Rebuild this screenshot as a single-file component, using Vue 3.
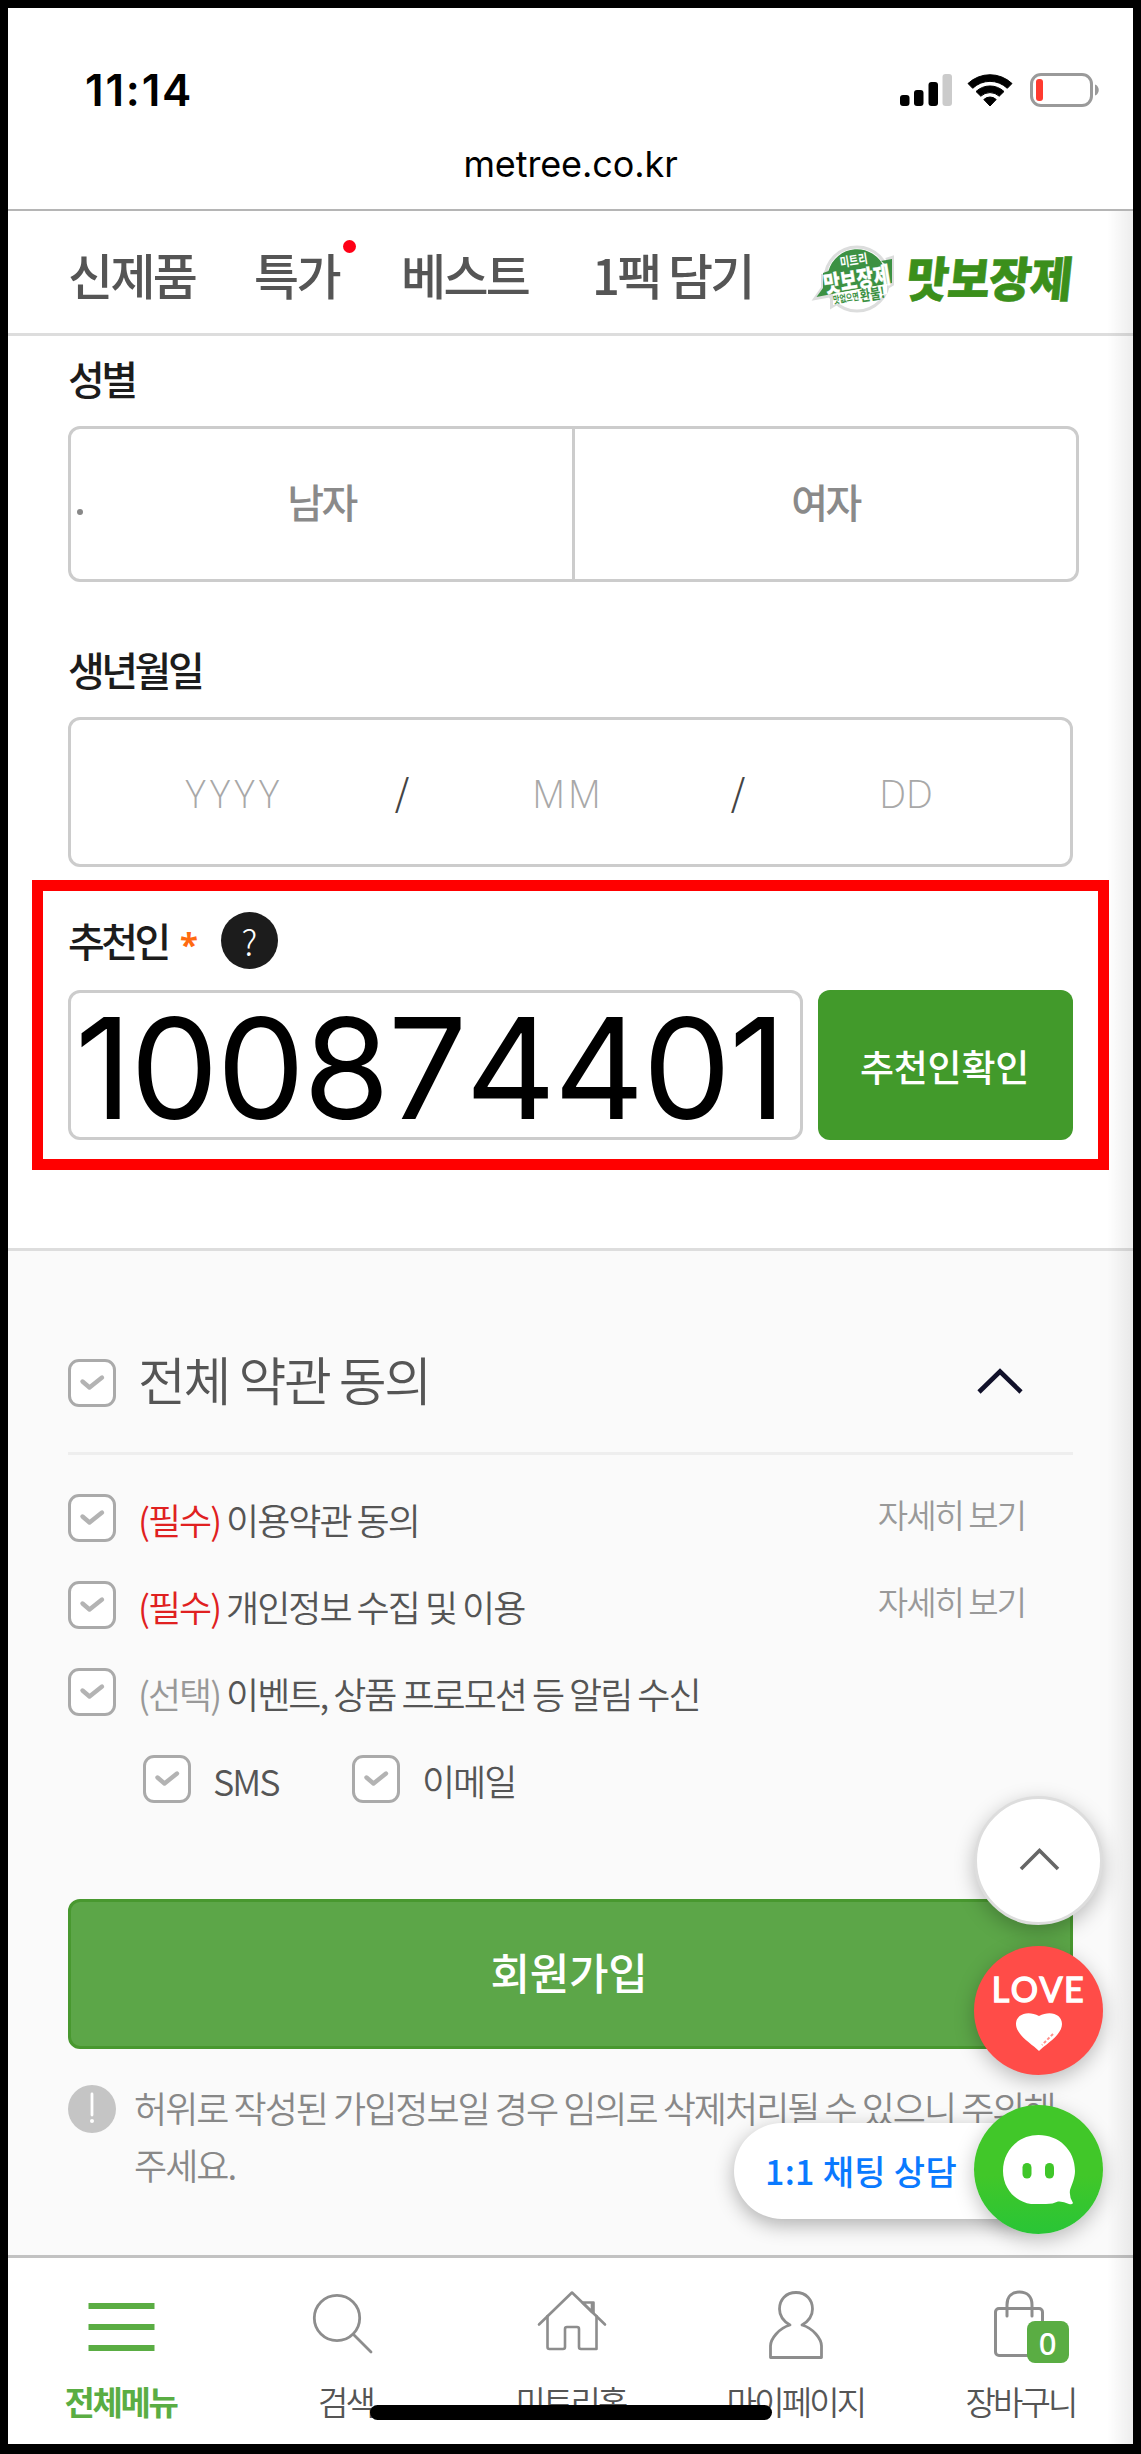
<script setup>
import { h } from 'vue'

const Check = () =>
  h('svg', { class: 'tick', viewBox: '0 0 48 48' }, [
    h('path', {
      d: 'M14.5 22.5L21.5 28.5L34 18.5',
      fill: 'none',
      stroke: '#b3b3b3',
      'stroke-width': 4.4,
      'stroke-linecap': 'round',
      'stroke-linejoin': 'round'
    })
  ])

const menus = [
  { text: '신제품', cls: 'm1' },
  { text: '특가', cls: 'm2', dot: true },
  { text: '베스트', cls: 'm3' },
  { text: '1팩 담기', cls: 'm4' }
]

const terms = [
  { tag: '(필수)', text: '이용약관 동의', required: true, more: true },
  { tag: '(필수)', text: '개인정보 수집 및 이용', required: true, more: true },
  { tag: '(선택)', text: '이벤트, 상품 프로모션 등 알림 수신', required: false, more: false }
]
</script>

<template>
  <div class="phone">
    <header class="status">
      <div class="status-row">
        <span class="time">11:14</span>
        <div class="indicators">
          <svg class="signal" width="52" height="34" viewBox="0 0 52 34">
            <rect x="0" y="22" width="9.5" height="11" rx="3" />
            <rect x="14" y="17" width="9.5" height="16" rx="3" />
            <rect x="28.500" y="9" width="9.500" height="24" rx="3" />
            <rect x="42.500" y="1" width="9.500" height="32" rx="3" fill="#cbcbcb" />
          </svg>
          <svg class="wifi" width="46" height="34" viewBox="0 0 46 34">
            <path d="M1 10.500A32 32 0 0 1 45 10.500L40.300 15.300A25 25 0 0 0 5.700 15.300Z" stroke="#000" stroke-width="1" stroke-linejoin="round" />
            <path d="M9 18.500A20.500 20.500 0 0 1 37 18.500L32.200 23.200A13.500 13.500 0 0 0 13.800 23.200Z" stroke="#000" stroke-width="1" stroke-linejoin="round" />
            <path d="M16.800 26.500A9 9 0 0 1 29.200 26.500L23 33Z" stroke="#000" stroke-width="1" stroke-linejoin="round" />
          </svg>
          <svg class="battery" width="70" height="34" viewBox="0 0 70 34">
            <rect x="1.500" y="1.500" width="60" height="31" rx="9.500" fill="none" stroke="#9a9a9a" stroke-width="3" />
            <rect x="6" y="6" width="7" height="22" rx="3" fill="#ff3b30" />
            <path d="M65 11.500C70 13 70 21 65 22.500Z" fill="#9a9a9a" />
          </svg>
        </div>
      </div>
      <div class="url">metree.co.kr</div>
    </header>

    <nav class="menu">
      <span v-for="m in menus" :key="m.text" class="menu-item" :class="m.cls">{{ m.text }}<i v-if="m.dot" class="dot"></i></span>
      <span class="brand">
        <svg class="badge" width="84" height="68" viewBox="0 0 84 68">
          <circle cx="43" cy="34" r="32" fill="#fff" stroke="#dcdddd" stroke-width="3" />
          <path d="M11 28L17 26M9 29V43L2 53L18 50V61L26 56M72 15L78 13V39L73 42" fill="none" stroke="#dcdddd" stroke-width="4" />
          <path d="M14.500 26A29.500 29.500 0 0 1 70 22L78 14V38L18 49L2.500 52L9 43V28Z" fill="#3c9143" />
          <path d="M67 16L78 14V24Z" fill="#3c9143" />
          <path d="M19 49L73 39V49L19 60Z" fill="#fff" />
          <g transform="rotate(-9 42 36)" fill="#fff" text-anchor="middle" class="badge-text">
            <text x="43" y="20" font-size="13" textLength="28" lengthAdjust="spacingAndGlyphs">미트리</text>
            <text x="43" y="43" font-size="23" textLength="67" lengthAdjust="spacingAndGlyphs" font-weight="900" stroke="#fff" stroke-width=".3">맛보장제</text>
            <text x="29.500" y="55" font-size="10" textLength="26" lengthAdjust="spacingAndGlyphs" fill="#3c9143">맛없으면</text>
            <text x="56" y="57" font-size="15" textLength="25" lengthAdjust="spacingAndGlyphs" fill="#3c9143">환불!</text>
          </g>
        </svg>
        <b class="brand-name">맛보장제</b>
      </span>
    </nav>

    <main class="form">
      <label class="title">성별</label>
      <div class="gender">
        <div class="choice"><i class="speck"></i>남자</div>
        <div class="choice">여자</div>
      </div>

      <label class="title birth-title">생년월일</label>
      <div class="birth">
        <span class="ph yyyy">YYYY</span><span class="slash">/</span>
        <span class="ph mm">MM</span><span class="slash">/</span>
        <span class="ph dd">DD</span>
      </div>

      <div class="referrer">
        <div class="ref-head">
          <label class="title">추천인</label>
          <span class="star">*</span>
          <span class="help">?</span>
        </div>
        <div class="ref-row">
          <div class="ref-input">100874401</div>
          <button class="ref-btn">추천인확인</button>
        </div>
      </div>
    </main>

    <section class="terms">
      <div class="all">
        <span class="box"><Check /></span>
        <span class="all-text">전체 약관 동의</span>
        <svg class="fold" width="50" height="30" viewBox="0 0 50 30">
          <path d="M4 25L25 4.500L46 25" fill="none" stroke="#11112a" stroke-width="4.600" />
        </svg>
      </div>
      <div v-for="t in terms" :key="t.text" class="term">
        <span class="box"><Check /></span>
        <span class="term-text"><em :class="{ must: t.required }">{{ t.tag }}</em> {{ t.text }}</span>
        <a v-if="t.more" class="more">자세히 보기</a>
      </div>
      <div class="term sub">
        <span class="box"><Check /></span>
        <span class="term-text sms">SMS</span>
        <span class="box"><Check /></span>
        <span class="term-text">이메일</span>
      </div>

      <button class="join">회원가입</button>

      <div class="notice">
        <svg width="48" height="48" viewBox="0 0 48 48">
          <circle cx="24" cy="24" r="24" fill="#c5c5c5" />
          <path d="M24 9V30" stroke="#fff" stroke-width="2.800" stroke-linecap="round" />
          <circle cx="24" cy="36" r="2" fill="#fff" />
        </svg>
        <p>허위로 작성된 가입정보일 경우 임의로 삭제처리될 수 있으니 주의해<br />주세요.</p>
      </div>
    </section>

    <footer class="tabs">
      <div class="tab on">
        <svg width="70" height="72" viewBox="0 0 70 72">
          <path d="M2.500 18H68.500M2.500 39H68.500M2.500 60H68.500" stroke="#5aad43" stroke-width="6" />
        </svg>
        <span>전체메뉴</span>
      </div>
      <div class="tab">
        <svg width="70" height="72" viewBox="0 0 70 72">
          <g fill="none" stroke="#8d8d8d" stroke-width="2.800" stroke-linecap="round">
            <circle cx="26" cy="30" r="22.700" />
            <path d="M42.500 46.500L60 64" />
          </g>
        </svg>
        <span>검색</span>
      </div>
      <div class="tab">
        <svg width="74" height="72" viewBox="0 0 74 72">
          <g fill="none" stroke="#8d8d8d" stroke-width="2.600" stroke-linecap="round" stroke-linejoin="round">
            <path d="M5 36.500L38 4.500L71 36.500" />
            <path d="M13.500 28V59Q13.500 61 15.500 61H29Q31 61 31 59V41Q31 39 33 39H43Q45 39 45 41V59Q45 61 47 61H62.500V28" />
            <path d="M48.500 14.500H59.500V25M49 15L58 24V15" />
          </g>
        </svg>
        <span>미트리홈</span>
      </div>
      <div class="tab">
        <svg width="70" height="72" viewBox="0 0 70 72">
          <path d="M29 37C22 33 18.500 27.500 18.500 21C18.500 11.500 25 4.500 35 4.500S51.500 11.500 51.500 21C51.500 27.500 48 33 41 37C52 40 60.500 51 60.500 58V69.500H9.500V58C9.500 51 18 40 29 37Z" fill="none" stroke="#8d8d8d" stroke-width="2.800" stroke-linejoin="round" />
        </svg>
        <span>마이페이지</span>
      </div>
      <div class="tab">
        <div class="bag">
          <svg width="70" height="72" viewBox="0 0 70 72">
            <g fill="none" stroke="#8d8d8d" stroke-width="3" stroke-linecap="round">
              <rect x="9.500" y="20.500" width="47" height="47" rx="3.500" />
              <path d="M21 28V17C21 8 26.500 4 33.500 4S46 8 46 17V28" />
            </g>
          </svg>
          <b>0</b>
        </div>
        <span>장바구니</span>
      </div>
      <i class="home-bar"></i>
    </footer>

    <div class="edge"></div>

    <div class="chat-pill">1:1 채팅 상담</div>
    <div class="floats">
      <div class="fab up">
        <svg width="44" height="28" viewBox="0 0 44 28">
          <path d="M4 24L22.500 5.500L41 24" fill="none" stroke="#666" stroke-width="3.600" />
        </svg>
      </div>
      <div class="fab love">
        <span>LOVE</span>
        <svg width="48" height="40" viewBox="0 0 48 40">
          <path d="M24 39C17 32 1 23 1 12C1 2 13-2 24 4C35-2 47 2 47 12C47 23 31 32 24 39Z" fill="#fff" />
          <path d="M38 22L32 28M31 29L27 33" stroke="#ff8f8a" stroke-width="2" stroke-dasharray="3 2" />
        </svg>
      </div>
      <div class="fab chat">
        <svg width="129" height="129" viewBox="0 0 129 129">
          <path d="M64.500 30C85 30 101 45 101 66C101 73 98 79 96 85Q95 92 99 98Q98 100 95 99Q89 96 84 96.500Q79 99 72 99H57C42 97 29 84 29 66C29 46 44 30 64.500 30Z" fill="#fff" />
          <rect x="48.500" y="58" width="9" height="15.500" rx="4.500" fill="#3fc629" />
          <rect x="71" y="58" width="9" height="15.500" rx="4.500" fill="#3fc629" />
        </svg>
      </div>
    </div>
  </div>
</template>

<style>
body {
  margin: 0;
}
</style>

<style scoped>
* {
  box-sizing: border-box;
}
.phone {
  position: relative;
  width: 1141px;
  height: 2454px;
  border: 8px solid #000;
  border-bottom-width: 10px;
  background: #fff;
  overflow: hidden;
  display: flex;
  flex-direction: column;
  font-family: 'Noto Sans CJK KR', sans-serif;
  color: #555;
  white-space: nowrap;
}
button {
  border: 0;
  padding: 0;
  font-family: inherit;
  color: #fff;
}
svg {
  display: block;
  flex: none;
}

/* status bar */
.status {
  height: 203px;
  border-bottom: 2px solid #b5b5b5;
  flex: none;
  font-family: Inter, sans-serif;
  color: #000;
}
.status-row {
  display: flex;
  justify-content: space-between;
  padding: 55px 33px 0 77px;
  height: 128px;
}
.time {
  font-size: 44px;
  font-weight: 600;
  line-height: 54px;
  letter-spacing: 1.8px;
}
.indicators {
  display: flex;
  padding-top: 10px;
}
.wifi {
  margin-left: 15px;
}
.battery {
  margin-left: 17px;
}
.url {
  text-align: center;
  font-size: 36px;
  line-height: 56px;
  letter-spacing: -0.1px;
}

/* top menu */
.menu {
  flex: none;
  height: 125px;
  border-bottom: 3px solid #ddd;
  display: flex;
  align-items: center;
  padding: 3px 0 0 60px;
}
.menu-item {
  position: relative;
  font-size: 49px;
  font-weight: 500;
  letter-spacing: -2.7px;
  line-height: 60px;
  color: #555;
}
.m1 { width: 186px; }
.m2 { width: 147px; }
.m3 { width: 191px; }
.m4 { width: 214px; }
.dot {
  position: absolute;
  left: 89px;
  top: -4px;
  width: 13px;
  height: 13px;
  border-radius: 50%;
  background: #ff0016;
}
.brand {
  display: flex;
  align-items: center;
  margin-left: 8px;
}
.badge {
  margin-top: 10px;
  overflow: visible;
}
.badge-text {
  font-weight: 700;
}
.brand-name {
  font-size: 46px;
  font-weight: 900;
  line-height: 60px;
  letter-spacing: -1px;
  color: #3b8f1b;
  -webkit-text-stroke: 0.6px #3b8f1b;
  transform: skewX(-6deg) scaleY(1.04);
  margin: 5px 0 0 9px;
}

/* form */
.form {
  flex: none;
  height: 912px;
  padding: 17px 0 0 60px;
}
.title {
  display: block;
  font-size: 40px;
  font-weight: 500;
  line-height: 50px;
  letter-spacing: -3.500px;
  color: #1c1c1c;
}
.gender {
  margin-top: 23px;
  width: 1011px;
  height: 156px;
  border: 3px solid #ccc;
  border-radius: 12px;
  display: flex;
}
.choice {
  position: relative;
  flex: 1;
  display: flex;
  align-items: center;
  justify-content: center;
  padding: 0 0 6px;
  font-size: 40px;
  font-weight: 500;
  line-height: 60px;
  letter-spacing: -2.500px;
  color: #8a8a8a;
}
.choice + .choice {
  border-left: 3px solid #ccc;
}
.speck {
  position: absolute;
  left: 6px;
  top: 80px;
  width: 6px;
  height: 6px;
  border-radius: 50%;
  background: #888;
}
.birth-title {
  margin-top: 62px;
}
.birth {
  margin-top: 23px;
  width: 1005px;
  height: 150px;
  border: 3px solid #ccc;
  border-radius: 12px;
  display: flex;
  align-items: center;
  font-family: 'Open Sans', sans-serif;
  font-size: 38px;
  line-height: 50px;
  padding-top: 1px;
}
.ph {
  font-weight: 300;
  color: #a8a8a8;
  text-align: center;
}
.yyyy {
  width: 326px;
  padding-left: 3px;
  letter-spacing: 4.4px;
  font-kerning: none;
}
.mm {
  width: 324px;
  padding-right: 4px;
  letter-spacing: 3px;
}
.dd {
  width: 327px;
  padding-right: 3px;
}
.slash {
  width: 14px;
  display: flex;
  justify-content: center;
  color: #444;
  font-family: 'Noto Sans CJK KR', sans-serif;
  font-size: 37px;
  font-weight: 350;
  margin-top: -6px;
}
.referrer {
  width: 1077px;
  height: 290px;
  margin: 13px 0 0 -36px;
  border: 11px solid #f00;
  padding: 21px 0 0 25px;
}
.ref-head {
  display: flex;
  height: 57px;
}
.ref-head .title {
  line-height: 57px;
  width: 112px;
}
.star {
  width: 41px;
  font-family: 'Noto Sans', sans-serif;
  font-weight: 700;
  font-size: 33px;
  line-height: 66px;
  color: #ff6a10;
}
.help {
  width: 57px;
  height: 57px;
  border-radius: 50%;
  background: #1c1c1c;
  color: #fff;
  font-weight: 300;
  font-size: 35px;
  line-height: 57px;
  text-align: center;
}
.ref-row {
  display: flex;
  gap: 15px;
  margin-top: 21px;
}
.ref-input {
  width: 735px;
  height: 150px;
  border: 3px solid #ccc;
  border-radius: 12px;
  font-family: Inter, sans-serif;
  font-size: 140px;
  line-height: 151px;
  letter-spacing: -1.8px;
  font-kerning: none;
  color: #000;
  padding-left: 4px;
}
.ref-btn {
  width: 255px;
  height: 150px;
  border-radius: 12px;
  background: #429a2b;
  font-size: 37px;
  font-weight: 500;
  letter-spacing: -0.2px;
  padding: 1px 2px 0 0;
}

/* terms */
.terms {
  flex: none;
  height: 1007px;
  border-top: 3px solid #ddd;
  background: #fafafa;
  padding-left: 60px;
}
.all {
  width: 1005px;
  height: 204px;
  border-bottom: 3px solid #eee;
  padding-top: 108px;
  display: flex;
}
.box {
  width: 48px;
  height: 48px;
  border: 3px solid #aaa;
  border-radius: 11px;
  background: #fff;
  flex: none;
}
.box :deep(.tick),
.tick {
  width: 48px;
  height: 48px;
  margin: -3px;
}
.all-text {
  flex: 1;
  margin-left: 22px;
  font-size: 52px;
  font-weight: 350;
  line-height: 60px;
  height: 48px;
  margin-top: -10px;
  letter-spacing: -2.3px;
}
.fold {
  margin: 8px 48px 0 0;
}
.term {
  display: flex;
  width: 1005px;
  height: 48px;
  margin-bottom: 39px;
}
.all + .term {
  margin-top: 39px;
}
.term-text {
  flex: 1;
  margin-left: 22px;
  font-size: 36px;
  font-weight: 350;
  line-height: 51px;
  letter-spacing: -2px;
}
.term-text em {
  font-style: normal;
  color: #999;
}
.term-text em.must {
  color: #e02020;
}
.more {
  font-size: 33px;
  font-weight: 350;
  line-height: 41px;
  letter-spacing: -2px;
  color: #999;
  margin-right: 48px;
}
.sub {
  padding-left: 75px;
  margin-bottom: 0;
}
.sub .term-text {
  line-height: 50px;
}
.sub .sms {
  flex: none;
  width: 139px;
}
.join {
  display: block;
  width: 1005px;
  height: 150px;
  margin-top: 96px;
  border: 3px solid #48982f;
  border-radius: 12px;
  background: #5ca648;
  font-size: 43px;
  font-weight: 500;
  letter-spacing: -0.3px;
  padding: 0 3px 7px 0;
}
.notice {
  display: flex;
  margin-top: 36px;
}
.notice p {
  margin: -6px 0 0 18px;
  font-size: 36px;
  font-weight: 350;
  line-height: 57px;
  letter-spacing: -1.97px;
  color: #888;
}

/* tab bar */
.tabs {
  position: relative;
  flex: none;
  height: 189px;
  border-top: 3px solid #c2c2c2;
  background: #fff;
  display: grid;
  grid-template-columns: repeat(5, 1fr);
}
.tab {
  display: flex;
  flex-direction: column;
  align-items: center;
  padding-top: 30px;
}
.tab span {
  font-size: 33px;
  font-weight: 350;
  line-height: 40px;
  margin: 21px 0 0;
  letter-spacing: -2.8px;
}
.tab.on span {
  font-weight: 600;
  letter-spacing: -2.4px;
  color: #5aad43;
}
.bag {
  position: relative;
}
.bag b {
  position: absolute;
  left: 41px;
  top: 33px;
  width: 42px;
  height: 42px;
  border-radius: 8px;
  background: #5aad43;
  color: #fff;
  font-family: 'Noto Sans', sans-serif;
  font-size: 31px;
  font-weight: 500;
  line-height: 45px;
  text-align: center;
}
.home-bar {
  position: absolute;
  left: 362px;
  top: 147px;
  width: 402px;
  height: 15px;
  border-radius: 8px;
  background: #000;
}

/* overlays */
.edge {
  position: absolute;
  right: 0;
  top: 203px;
  bottom: 0;
  width: 26px;
  background: linear-gradient(to right, rgba(0, 0, 0, 0), rgba(0, 0, 0, 0.07));
}
.chat-pill {
  position: absolute;
  left: 726px;
  top: 2115px;
  width: 320px;
  height: 96px;
  border-radius: 48px;
  background: #fff;
  box-shadow: 0 6px 20px rgba(0, 0, 0, 0.3);
  padding-left: 31px;
  font-size: 34px;
  font-weight: 500;
  line-height: 96px;
  letter-spacing: 0.3px;
  color: #0a7aff;
}
.floats {
  position: absolute;
  left: 966px;
  top: 1788px;
  display: flex;
  flex-direction: column;
}
.fab {
  width: 129px;
  height: 129px;
  border-radius: 50%;
  box-shadow: 0 6px 20px rgba(0, 0, 0, 0.25);
  display: flex;
  flex-direction: column;
  align-items: center;
}
.up {
  border: 3px solid #ddd;
  background: #fff;
  padding-top: 46px;
}
.love {
  margin-top: 21px;
  background: #ff4c48;
}
.love span {
  margin-top: 25px;
  height: 41px;
  font-family: Lato, sans-serif;
  font-size: 34px;
  line-height: 36px;
  color: #fff;
  letter-spacing: 1.5px;
  font-kerning: none;
  -webkit-text-stroke: 1.4px #fff;
}
.chat {
  margin-top: 30px;
  background: linear-gradient(#41c729 55%, #29c536);
}
</style>
